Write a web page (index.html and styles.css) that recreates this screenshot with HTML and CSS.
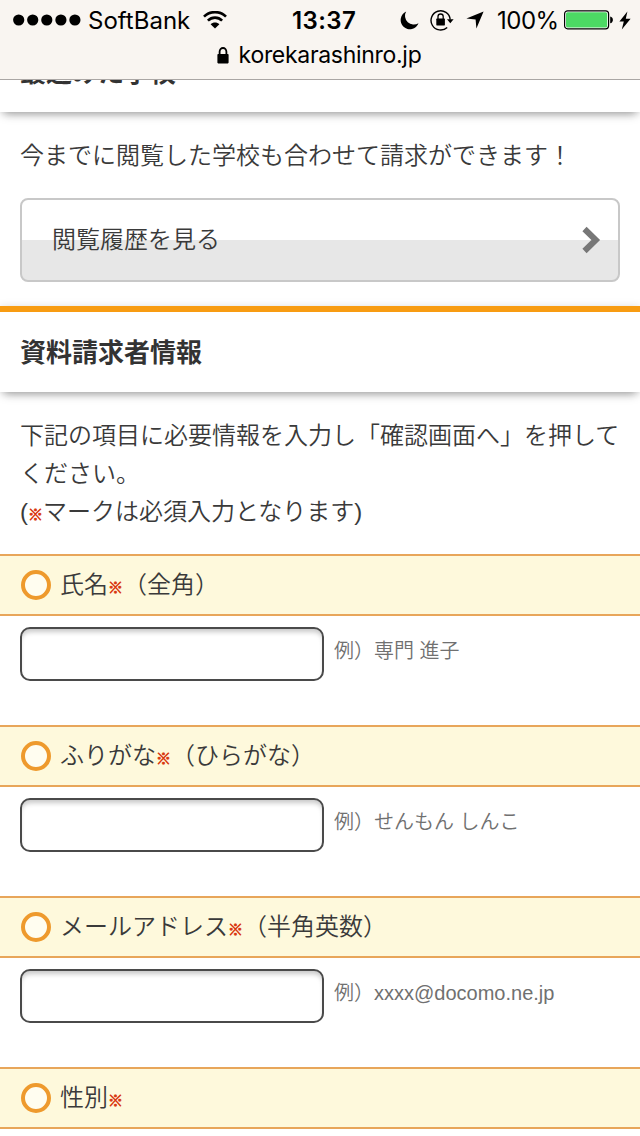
FILE: index.html
```html
<!DOCTYPE html>
<html lang="ja">
<head>
    <meta charset="UTF-8">
    <meta name="viewport" content="width=device-width, initial-scale=1.0">
    <title>資料請求者情報</title>
    <link rel="stylesheet" href="styles.css">
</head>
<body>
    <!-- Phone status bar and address -->
    <header class="top-bar">
        <div class="status">
            <div class="status-left">
                <svg class="dots" width="68" height="12" viewBox="0 0 68 12">
                    <circle cx="5.7" cy="6" r="5.6"/>
                    <circle cx="19.7" cy="6" r="5.6"/>
                    <circle cx="33.8" cy="6" r="5.6"/>
                    <circle cx="47.9" cy="6" r="5.6"/>
                    <circle cx="61.9" cy="6" r="5.6"/>
                </svg>
                <span class="carrier">SoftBank</span>
                <svg class="wifi" width="24" height="18" viewBox="0 0 24 18">
                    <path d="M1 5.6C7 -.4 17 -.4 23 5.6M4.9 9.6c4-4 10.2-4 14.2 0" fill="none" stroke="#000" stroke-width="2.6"/>
                    <path d="M12 17.6 7.6 13.2c2.4-2.4 6.4-2.4 8.8 0z"/>
                </svg>
            </div>
            <span class="time">13:37</span>
            <div class="status-right">
                <svg width="19" height="19" viewBox="0 0 19 19">
                    <path d="M6.2.6A9.2 9.2 0 1 0 18.5 12.2 8.7 8.7 0 0 1 6.2.6z"/>
                </svg>
                <svg class="rotation" width="24" height="22" viewBox="0 0 24 22">
                    <path d="M17.2 18.4A9.6 9.6 0 1 1 20.2 10.6" fill="none" stroke="#000" stroke-width="1.4"/>
                    <path d="M17 10.2h6.6l-3.3 4z"/>
                    <rect x="6.3" y="9.6" width="8.6" height="6.8" rx=".6"/>
                    <path d="M8 10V7.6a2.6 2.6 0 0 1 5.2 0V10" fill="none" stroke="#000" stroke-width="1.3"/>
                </svg>
                <svg class="arrow" width="18" height="18" viewBox="0 0 18 18">
                    <path d="M17.6.5 10.4 17.6 9.6 8.6.4 7.5z"/>
                </svg>
                <span class="percent">100%</span>
                <svg class="battery" width="50" height="20" viewBox="0 0 50 20">
                    <rect x=".6" y=".8" width="44" height="18" rx="3" fill="#fff" stroke="#000" stroke-width="1.2"/>
                    <rect x="2" y="2.2" width="41.2" height="15.2" rx="1.6" fill="#4cd964"/>
                    <path d="M46.2 6.4c3.6.4 3.6 6.4 0 6.8z"/>
                </svg>
                <svg class="bolt" width="12" height="19" viewBox="0 0 12 19">
                    <path d="M8.4.4.4 10.6h4.4L2.8 18.6 11.6 7.8H6.8z"/>
                </svg>
            </div>
        </div>
        <div class="address">
            <svg width="12" height="17" viewBox="0 0 12 17">
                <rect x=".4" y="7" width="11.2" height="9.4" rx=".8"/>
                <path d="M2.6 8V4.8a3.4 3.8 0 0 1 6.8 0V8" fill="none" stroke="#000" stroke-width="1.8"/>
            </svg>
            <span>korekarashinro.jp</span>
        </div>
    </header>

    <main class="page">
        <section class="history">
            <h2 class="heading">最近みた学校</h2>
            <p class="text">今までに閲覧した学校も合わせて請求ができます！</p>
            <a class="history-button" href="#">
                <span>閲覧履歴を見る</span>
                <svg class="chevron" width="22" height="30" viewBox="0 0 22 30">
                    <path d="M4.5 4 15.8 15 4.5 26" fill="none" stroke="#777" stroke-width="6"/>
                </svg>
            </a>
        </section>

        <section class="applicant">
            <h2 class="heading">資料請求者情報</h2>
            <p class="text">下記の項目に必要情報を入力し「確認画面へ」を押してください。<br>(<span class="required">※</span>マークは必須入力となります)</p>

            <form>
                <div class="field">
                    <label class="label" for="name"><i class="ring"></i><span>氏名<span class="required">※</span>（全角）</span></label>
                    <div class="entry">
                        <input class="input" id="name" type="text">
                        <span class="example">例）専門 進子</span>
                    </div>
                </div>
                <div class="field">
                    <label class="label" for="kana"><i class="ring"></i><span>ふりがな<span class="required">※</span>（ひらがな）</span></label>
                    <div class="entry">
                        <input class="input" id="kana" type="text">
                        <span class="example">例）せんもん しんこ</span>
                    </div>
                </div>
                <div class="field">
                    <label class="label" for="mail"><i class="ring"></i><span>メールアドレス<span class="required">※</span>（半角英数）</span></label>
                    <div class="entry">
                        <input class="input" id="mail" type="text">
                        <span class="example">例）xxxx@docomo.ne.jp</span>
                    </div>
                </div>
                <div class="field">
                    <div class="label"><i class="ring"></i><span>性別<span class="required">※</span></span></div>
                </div>
            </form>
        </section>
    </main>
</body>
</html>
```

FILE: styles.css
```css
* {
    box-sizing: border-box;
}

body {
    margin: 0;
    height: 1136px;
    display: flex;
    flex-direction: column;
    overflow: hidden;
    background-color: #fff;
    color: #3a3a3a;
    font-family: "Liberation Sans", "Noto Sans CJK JP", sans-serif;
    font-size: 24px;
    font-weight: 350;
}

svg {
    display: block;
    flex-shrink: 0;
}

/* Status bar */
.top-bar {
    height: 80px;
    flex-shrink: 0;
    background-color: #f9f5f1;
    border-bottom: 1px solid #aaa6a4;
    color: #000;
    font-family: Inter, sans-serif;
    font-weight: 400;
}

.status {
    height: 40px;
    padding: 0 9px 0 13px;
    display: grid;
    grid-template-columns: 279px 1fr 231px;
    align-items: center;
}

.status-left,
.status-right {
    display: flex;
    align-items: center;
}

.carrier {
    margin-left: 7px;
    width: 103px;
    font-size: 24px;
}

.wifi {
    margin-left: 12px;
}

.time {
    font-size: 24px;
    font-weight: 600;
    letter-spacing: 0.4px;
    white-space: nowrap;
}

.rotation {
    margin-left: 11px;
}

.arrow {
    margin-left: 12px;
}

.percent {
    margin-left: 13px;
    width: 60px;
    font-size: 24px;
    letter-spacing: -0.5px;
}

.battery {
    margin-left: 7px;
}

.bolt {
    margin-left: 5px;
}

.address {
    height: 30px;
    padding-right: 2px;
    display: flex;
    justify-content: center;
    align-items: center;
    gap: 10px;
    font-size: 23px;
    letter-spacing: -0.3px;
    line-height: 30px;
}

/* Page */
.page {
    flex: 1;
    overflow: hidden;
}

.heading {
    margin: 0;
    height: 86px;
    padding: 1px 20px 0;
    border-top: 6px solid #f89c12;
    background-color: #fff;
    box-shadow: 0 6px 9px -4px rgba(0, 0, 0, 0.35), 0 0 8px rgba(0, 0, 0, 0.12);
    color: #333;
    font-size: 26px;
    font-weight: 700;
    line-height: 80px;
}

/* Scrolled partly under the address bar */
.history .heading {
    margin-top: -54px;
}

.text {
    margin: 0 20px;
    padding: 25px 0 23px;
    line-height: 38px;
}

.history-button {
    margin: 0 20px 24px;
    height: 84px;
    padding: 0 16px 0 30px;
    display: flex;
    justify-content: space-between;
    align-items: center;
    border: 2px solid #c8c8c8;
    border-radius: 8px;
    background: linear-gradient(#fff 50%, #e7e7e7 50%);
    color: #3a3a3a;
    line-height: 36px;
    text-decoration: none;
}

.history-button span {
    padding-bottom: 1px;
}

.chevron {
    filter: blur(0.6px);
}

.required {
    color: #d9380f;
    font-size: 15px;
    line-height: 0;
    -webkit-text-stroke: 0.7px #d9380f;
}

/* Form */
.field {
    height: 171px;
}

.label {
    height: 62px;
    padding: 0 20px 0 21px;
    display: flex;
    align-items: center;
    gap: 9px;
    border-top: 2px solid #e8a65a;
    border-bottom: 2px solid #e8a65a;
    background-color: #fef9dc;
    line-height: 36px;
    white-space: nowrap;
}

.ring {
    width: 30px;
    height: 30px;
    border: 4px solid #ee9a2d;
    border-radius: 50%;
    background-color: #fffdf0;
    filter: blur(0.6px);
}

.entry {
    padding: 11px 20px 0;
    display: flex;
    gap: 10px;
}

.input {
    width: 304px;
    height: 54px;
    border: 2px solid #4a4a4a;
    border-radius: 10px;
    background-color: #fff;
    box-shadow: inset 0 5px 5px -2px rgba(0, 0, 0, 0.22);
}

.example {
    color: #707070;
    font-size: 20px;
    line-height: 49px;
}
```
